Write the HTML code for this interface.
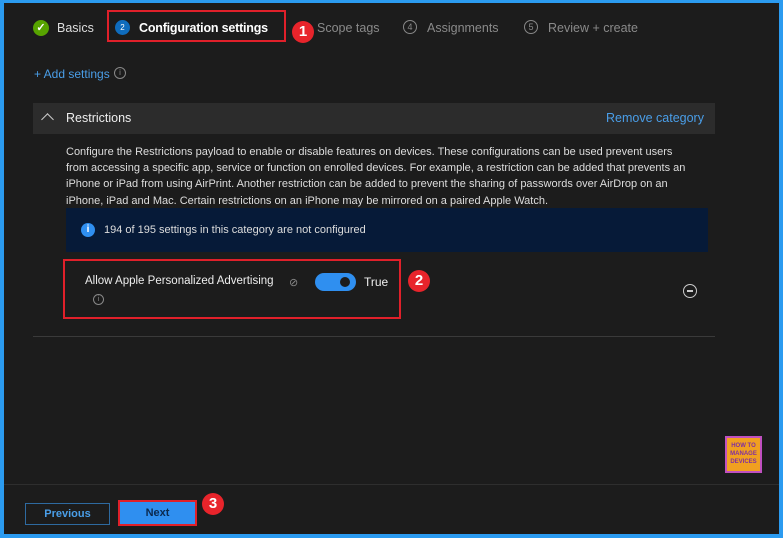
<!DOCTYPE html>
<html><head><style>
*{margin:0;padding:0;box-sizing:border-box}
body{width:783px;height:538px;background:#2b9bf0;font-family:"Liberation Sans",sans-serif;position:relative;overflow:hidden}
.main{position:absolute;left:4px;top:3px;width:775px;height:531px;background:#1c1c1c}
.a{position:absolute}
.t{color:#fff;font-size:12.5px;white-space:nowrap}
.g{color:#8a8a8a}
.badge{position:absolute;width:22px;height:22px;border-radius:50%;background:#e8242b;color:#fff;font-weight:bold;font-size:15px;text-align:center;line-height:22px}
.circ{position:absolute;width:14px;height:14px;border-radius:50%;border:1px solid #888;color:#888;font-size:9px;text-align:center;line-height:12px}
</style></head><body>
<div class="main"></div>
<div class="a" style="left:33px;top:20px;width:16px;height:16px;border-radius:50%;background:#57a300;color:#fff;font-size:11px;text-align:center;line-height:16px;font-weight:bold">✓</div>
<div class="a t" style="left:57px;top:21px;color:#ddd">Basics</div>
<div class="a" style="left:107px;top:10px;width:179px;height:32px;border:2px solid #e0202a"></div>
<div class="a" style="left:115px;top:20px;width:15px;height:15px;border-radius:50%;background:#0f6cbd;color:#fff;font-size:8px;text-align:center;line-height:15px">2</div>
<div class="a t" style="left:139px;top:21px;font-weight:bold;letter-spacing:-0.2px">Configuration settings</div>
<div class="badge" style="left:292px;top:21px">1</div>
<div class="a t g" style="left:317px;top:21px">Scope tags</div>
<div class="circ" style="left:403px;top:20px">4</div>
<div class="a t g" style="left:427px;top:21px">Assignments</div>
<div class="circ" style="left:524px;top:20px">5</div>
<div class="a t g" style="left:548px;top:21px">Review + create</div>
<div class="a" style="left:34px;top:67px;color:#4a9ee8;font-size:12px">+ Add settings</div>
<div class="circ" style="left:114px;top:67px;width:12px;height:12px;font-size:8px;line-height:10px">i</div>
<div class="a" style="left:33px;top:103px;width:682px;height:31px;background:#2c2c2c"></div>
<div class="a" style="left:43px;top:115px;width:9px;height:9px;border-left:1.5px solid #ccc;border-top:1.5px solid #ccc;transform:rotate(45deg)"></div>
<div class="a t" style="left:66px;top:111px;color:#eee">Restrictions</div>
<div class="a t" style="left:606px;top:111px;color:#4a9ee8">Remove category</div>
<div class="a" style="left:66px;top:144px;width:630px;color:#ddd;font-size:11px;line-height:16.2px">Configure the Restrictions payload to enable or disable features on devices. These configurations can be used prevent users from accessing a specific app, service or function on enrolled devices. For example, a restriction can be added that prevents an iPhone or iPad from using AirPrint. Another restriction can be added to prevent the sharing of passwords over AirDrop on an iPhone, iPad and Mac. Certain restrictions on an iPhone may be mirrored on a paired Apple Watch.</div>
<div class="a" style="left:66px;top:208px;width:642px;height:44px;background:#061a38"></div>
<div class="a" style="left:81px;top:223px;width:14px;height:14px;border-radius:50%;background:#2f8ff0;color:#fff;font-size:10px;font-weight:bold;text-align:center;line-height:14px">i</div>
<div class="a" style="left:104px;top:224px;color:#ddd;font-size:11px">194 of 195 settings in this category are not configured</div>
<div class="a" style="left:63px;top:259px;width:338px;height:60px;border:2px solid #e0202a"></div>
<div class="a" style="left:85px;top:275px;color:#eee;font-size:11.5px;white-space:nowrap">Allow Apple Personalized Advertising</div>
<div class="a" style="left:289px;top:276px;color:#888;font-size:11px">⊘</div>
<div class="a" style="left:315px;top:273px;width:41px;height:18px;border-radius:9px;background:#2f8ff0"></div>
<div class="a" style="left:340px;top:277px;width:10px;height:10px;border-radius:50%;background:#1c1c1c"></div>
<div class="a" style="left:364px;top:275px;color:#eee;font-size:12px">True</div>
<div class="circ" style="left:93px;top:294px;width:11px;height:11px;font-size:7px;line-height:9px">i</div>
<div class="badge" style="left:408px;top:270px">2</div>
<div class="a" style="left:683px;top:284px;width:14px;height:14px;border-radius:50%;border:1.5px solid #ccc"></div>
<div class="a" style="left:687px;top:290px;width:6px;height:1.5px;background:#ccc"></div>
<div class="a" style="left:33px;top:336px;width:682px;height:1px;background:#3a3a3a"></div>
<div class="a" style="left:725px;top:436px;width:37px;height:37px;background:#f0a020;border:2px solid #c050c0;color:#8030a0;font-size:6px;font-weight:bold;text-align:center;line-height:8px;padding-top:4px">HOW TO<br>MANAGE<br>DEVICES</div>
<div class="a" style="left:4px;top:484px;width:775px;height:1px;background:#2e2e2e"></div>
<div class="a" style="left:25px;top:503px;width:85px;height:22px;border:1px solid #2e6aa0;color:#4a9ee8;font-size:11px;font-weight:bold;text-align:center;line-height:20px">Previous</div>
<div class="a" style="left:118px;top:500px;width:79px;height:26px;border:2px solid #e0202a;background:#2f8ff0;color:#0b2a50;font-size:11px;font-weight:bold;text-align:center;line-height:22px">Next</div>
<div class="badge" style="left:202px;top:493px">3</div>
</body></html>
